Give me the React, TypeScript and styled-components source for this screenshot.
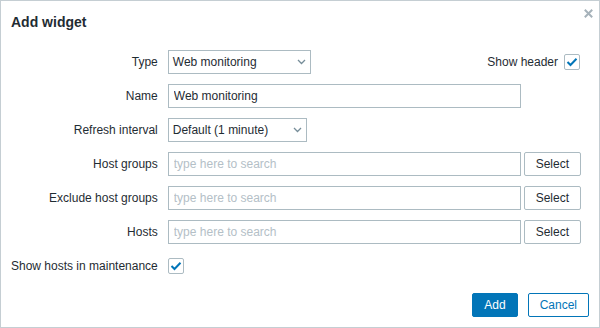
import React from "react"
import styled, { createGlobalStyle } from "styled-components"

const GlobalStyle = createGlobalStyle`
    html, body {
        margin: 0;
        padding: 0;
        background: #ffffff;
    }
    body {
        font-family: "Liberation Sans", Arial, sans-serif;
        font-size: 12px;
        color: #1f2c33;
    }
`

const Dialog = styled.div`
    position: relative;
    box-sizing: border-box;
    width: 600px;
    height: 328px;
    border: 1px solid #c5ced3;
    background: #ffffff;
    display: flex;
    flex-direction: column;
`

const Header = styled.div`
    padding: 13px 10px 10px;
`

const Title = styled.h4`
    margin: 0;
    font-size: 14px;
    line-height: 16px;
    font-weight: bold;
    color: #1f2c33;
`

const CloseButton = styled.button`
    position: absolute;
    top: 8px;
    right: 6px;
    width: 9px;
    height: 9px;
    padding: 0;
    border: 0;
    background: none;
    display: flex;
`

const Form = styled.div`
    display: grid;
    grid-template-columns: max-content 1fr;
    grid-auto-rows: 24px;
    column-gap: 10px;
    row-gap: 10px;
    padding: 10px 18px 0 10px;
`

const Label = styled.label`
    display: flex;
    align-items: center;
    justify-content: flex-end;
    white-space: nowrap;
    line-height: 14px;
`

const Field = styled.div`
    display: flex;
    align-items: center;
    min-width: 0;
`

const Select = styled.div<{ $width: number }>`
    box-sizing: border-box;
    width: ${p => p.$width}px;
    height: 24px;
    border: 1px solid #acbbc2;
    padding: 0 4px;
    display: flex;
    align-items: center;
    justify-content: space-between;
    line-height: 14px;
    background: #ffffff;
`

const TextInput = styled.input`
    box-sizing: border-box;
    width: 353px;
    height: 24px;
    margin: 0;
    border: 1px solid #acbbc2;
    padding: 0 5px;
    font-family: "Liberation Sans", Arial, sans-serif;
    font-size: 12px;
    color: #1f2c33;
    outline: none;
    &::placeholder {
        color: #b4c0c7;
        opacity: 1;
    }
`

const Button = styled.button<{ $primary?: boolean }>`
    box-sizing: border-box;
    height: 24px;
    margin: 0;
    padding: 0 11px;
    border: 1px solid ${p => (p.$primary ? "#0275b8" : "#acbbc2")};
    border-radius: 2px;
    background: ${p => (p.$primary ? "#0275b8" : "#ffffff")};
    color: ${p => (p.$primary ? "#ffffff" : "#1f2c33")};
    font-family: "Liberation Sans", Arial, sans-serif;
    font-size: 12px;
    line-height: 14px;
`

const OutlineButton = styled(Button)`
    border-color: #0275b8;
    color: #0275b8;
`

const SelectButton = styled(Button)`
    margin-left: 3px;
`

const HeaderToggle = styled.div`
    margin-left: auto;
    display: flex;
    align-items: center;
    gap: 6px;
    margin-right: 1px;
`

const Box = styled.span`
    box-sizing: border-box;
    width: 16px;
    height: 16px;
    border: 1px solid #acbbc2;
    border-radius: 2px;
    display: flex;
    align-items: center;
    justify-content: center;
    background: #ffffff;
`

const Footer = styled.div`
    margin-top: auto;
    padding: 10px;
    display: flex;
    justify-content: flex-end;
    gap: 10px;
`

const Chevron = () => (
    <svg width="9" height="6" viewBox="0 0 9 6">
        <path d="M1 1 L4.5 4.5 L8 1" fill="none" stroke="#768d99" strokeWidth="1.3" />
    </svg>
)

const Checkbox = () => (
    <Box>
        <svg width="14" height="14" viewBox="0 0 14 14">
            <path d="M2.5 7 L5.5 10 L11.5 3.8" fill="none" stroke="#0275b8" strokeWidth="2" />
        </svg>
    </Box>
)

const multiselects = ["Host groups", "Exclude host groups", "Hosts"]

const App = () => {
    return (
        <>
            <GlobalStyle />
            <Dialog>
                <Header>
                    <Title>Add widget</Title>
                </Header>
                <CloseButton aria-label="Close">
                    <svg width="9" height="9" viewBox="0 0 9 9">
                        <path d="M0.8 0.8 L8.2 8.2 M8.2 0.8 L0.8 8.2" stroke="#a6b2ba" strokeWidth="2" />
                    </svg>
                </CloseButton>
                <Form>
                    <Label>Type</Label>
                    <Field>
                        <Select $width={143}>
                            <span>Web monitoring</span>
                            <Chevron />
                        </Select>
                        <HeaderToggle>
                            <span>Show header</span>
                            <Checkbox />
                        </HeaderToggle>
                    </Field>

                    <Label>Name</Label>
                    <Field>
                        <TextInput defaultValue="Web monitoring" />
                    </Field>

                    <Label>Refresh interval</Label>
                    <Field>
                        <Select $width={139}>
                            <span>Default (1 minute)</span>
                            <Chevron />
                        </Select>
                    </Field>

                    {multiselects.map(name => (
                        <React.Fragment key={name}>
                            <Label>{name}</Label>
                            <Field>
                                <TextInput placeholder="type here to search" />
                                <SelectButton>Select</SelectButton>
                            </Field>
                        </React.Fragment>
                    ))}

                    <Label>Show hosts in maintenance</Label>
                    <Field>
                        <Checkbox />
                    </Field>
                </Form>
                <Footer>
                    <Button $primary>Add</Button>
                    <OutlineButton>Cancel</OutlineButton>
                </Footer>
            </Dialog>
        </>
    )
}

export default App
